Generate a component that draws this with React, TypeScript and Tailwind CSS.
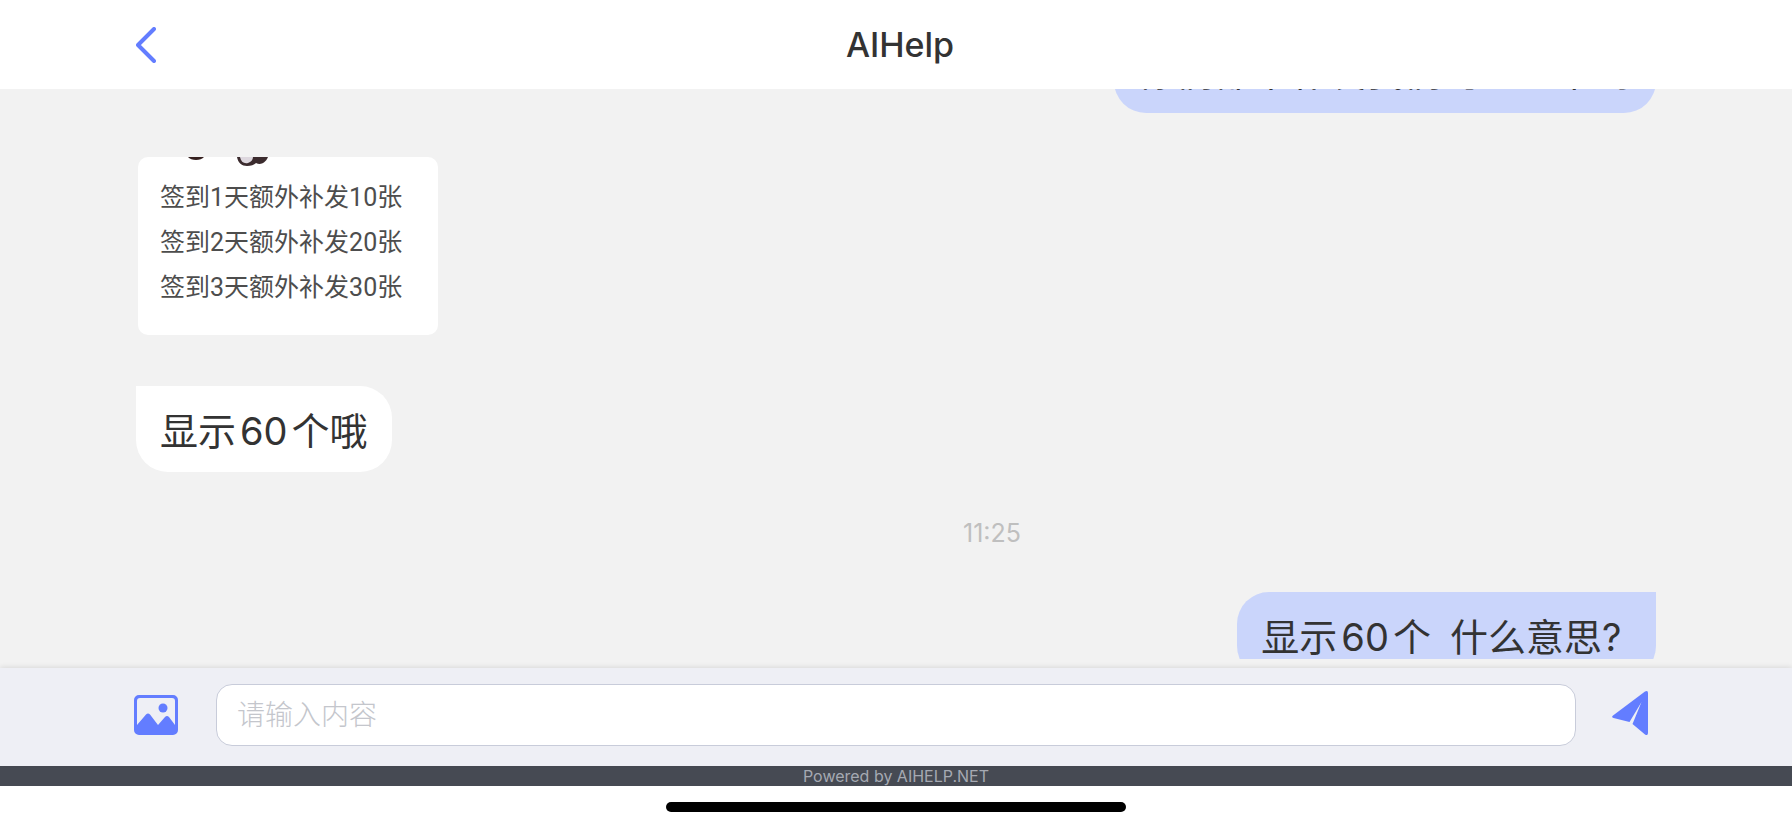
import type { ReactNode } from 'react';

interface Message {
  id: number;
  from: 'agent' | 'user';
  text: string;
}

const rewards = [
  { day: 1, amount: 10 },
  { day: 2, amount: 20 },
  { day: 3, amount: 30 },
];

const earlier: Message = { id: 1, from: 'user', text: '你们都不补发我们的签到卡吗' };
const reply: Message = { id: 2, from: 'agent', text: '显示60个哦' };
const latest: Message = { id: 3, from: 'user', text: '显示60个\u2002什么意思? ' };

function Bubble({ message }: { message: Message }) {
  const side =
    message.from === 'user'
      ? 'self-end bg-[#cad5fb] rounded-tr-none'
      : 'self-start bg-white rounded-tl-none';
  // digits get a little air between the Chinese characters
  const parts = message.text.split(/(\d+)/);
  return (
    <p className={`${side} shrink-0 whitespace-pre rounded-[32px] px-6 pb-[18px] pt-[22px] text-[38px] leading-[46px] text-[#333333]`}>
      {parts.map((part, i) => (
        /^\d+$/.test(part) ? <span key={i} className="mx-1">{part}</span> : part
      ))}
    </p>
  );
}

function RewardCard() {
  return (
    <div className="ml-0.5 mt-11 shrink-0 self-start overflow-hidden rounded-[10px] bg-white pb-[25px] pl-[22px] pr-9">
      <svg className="block" width="120" height="18" viewBox="0 0 120 18" aria-hidden="true">
        <path d="M28 0c3 4 13 4 16 0z" fill="#35201f" />
        <path d="M77 0c1 6 5 9 10 9 4 0 7-1 9-3 4 2 9 1 12-6z" fill="#3b2b2e" />
        <path d="M80 0c1 5 4 7 8 6 3-1 5-3 5-6z" fill="#ded8df" />
      </svg>
      <ul className="font-['Roboto','Noto_Sans_CJK_SC',sans-serif] text-[25px] leading-[45px] text-[#4d4d4d]">
        {rewards.map(reward => (
          <li key={reward.day}>签到{reward.day}天额外补发{reward.amount}张</li>
        ))}
      </ul>
    </div>
  );
}

function IconButton({ label, children }: { label: string; children: ReactNode }) {
  return (
    <button type="button" aria-label={label} className="shrink-0 cursor-pointer text-[#637dff]">
      {children}
    </button>
  );
}

export default function App() {
  return (
    <div className="flex h-screen flex-col overflow-hidden bg-white font-['Inter','Noto_Sans_CJK_SC',sans-serif]">
      <header className="grid shrink-0 grid-cols-[1fr_auto_1fr] items-center px-34 py-5">
        <IconButton label="返回">
          <svg width="20" height="36" viewBox="0 0 20 36" fill="none" stroke="currentColor" strokeWidth="4" strokeLinecap="round" strokeLinejoin="round">
            <path d="M18 2 2 18l16 16" />
          </svg>
        </IconButton>
        <h1 className="pl-2 text-[34px] font-medium leading-[49px] text-[#333333]">AIHelp</h1>
      </header>

      <main className="flex min-h-0 flex-1 flex-col bg-[#f2f2f2] px-34 pb-[9px]">
        <div className="flex min-h-0 flex-1 flex-col overflow-hidden">
          <div className="-mt-[62px] flex shrink-0 flex-col">
            <Bubble message={earlier} />
          </div>
          <RewardCard />
          <div className="mt-[51px] flex shrink-0 flex-col">
            <Bubble message={reply} />
          </div>
          <time className="ml-48 mt-11 shrink-0 text-center text-[25px] leading-[34px] text-[#bfbfbf]">11:25</time>
          <div className="mt-[42px] flex shrink-0 flex-col">
            <Bubble message={latest} />
          </div>
        </div>
      </main>

      <form
        className="relative flex shrink-0 items-center bg-[#eeeff5] pb-5 pl-[134px] pr-36 pt-4 shadow-[0_-1px_5px_rgba(0,0,0,0.1)]"
        onSubmit={event => event.preventDefault()}
      >
        <IconButton label="发送图片">
          <svg width="44" height="40" viewBox="0 0 44 40" fill="currentColor">
            <path fillRule="evenodd" d="M5 0h34a5 5 0 0 1 5 5v30a5 5 0 0 1-5 5H5a5 5 0 0 1-5-5V5a5 5 0 0 1 5-5zm1 3a3 3 0 0 0-3 3v24l9-10.500q2-2 4 0L24 30l7-8q2-2 4 0l6 8V6a3 3 0 0 0-3-3z" />
            <circle cx="29" cy="13" r="4.5" />
          </svg>
        </IconButton>
        <input
          type="text"
          aria-label="消息内容"
          placeholder="请输入内容"
          className="ml-[38px] mr-9 h-[62px] min-w-0 flex-1 rounded-2xl border border-[#c8ccda] bg-white px-5 text-[28px] font-light text-[#333333] placeholder:text-[#c4c6cc] focus:outline-none"
        />
        <IconButton label="发送">
          <svg width="36" height="48" viewBox="0 0 36 48" fill="currentColor">
            <path d="M33 .600Q36-1 36 2v40q0 3-3 1.500L20.500 33 29.500 11 17.500 31 1.500 27q-2.500-1-.500-2.500z" />
          </svg>
        </IconButton>
      </form>

      <footer className="shrink-0">
        <p className="bg-[#464a53] text-center text-base leading-5 text-[#a5a9b2]">Powered by AIHELP.NET</p>
        <div className="flex justify-center pb-4 pt-4">
          <div className="h-2.5 w-[460px] rounded-full bg-black" />
        </div>
      </footer>
    </div>
  );
}
